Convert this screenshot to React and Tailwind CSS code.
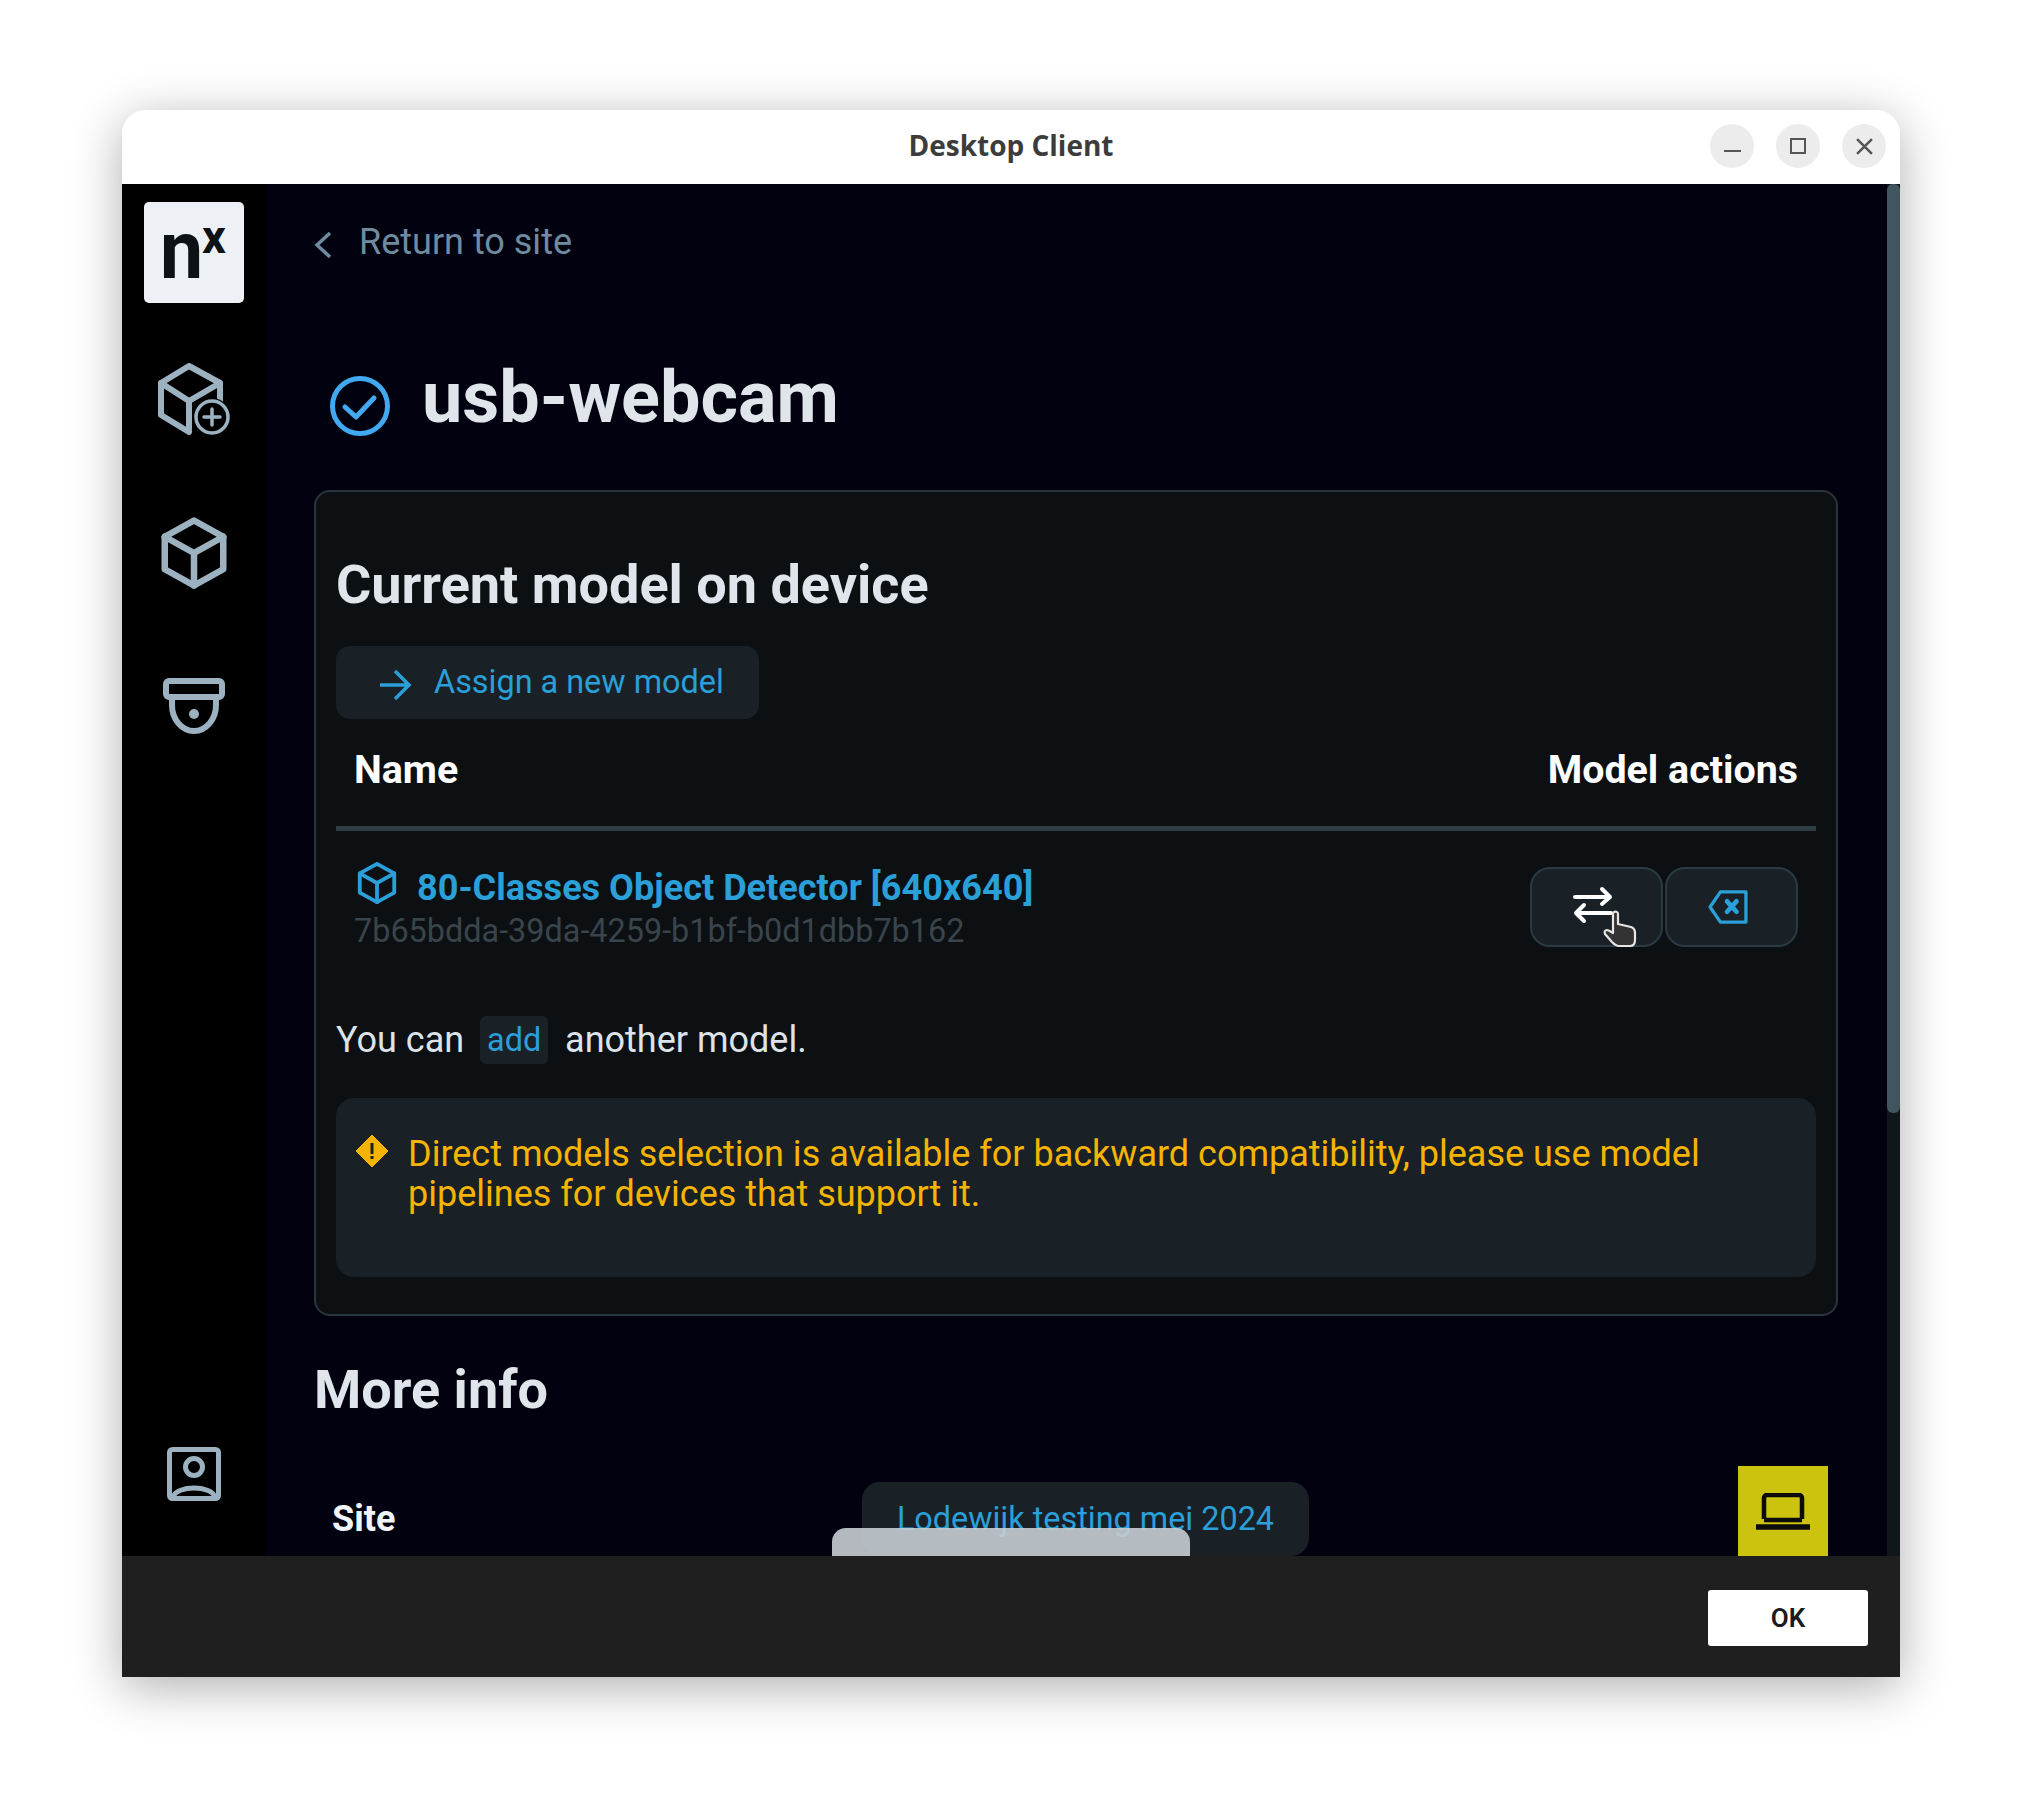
const sans = "font-['Roboto','Liberation_Sans',sans-serif]";

function CubeIcon({ className }) {
  return (
    <svg viewBox="0 0 24 24" fill="none" stroke="currentColor" strokeWidth="2" strokeLinejoin="round" strokeLinecap="round" className={className}>
      <path d="M12 2 L21 7 V17 L12 22 L3 17 V7 Z" />
      <path d="M3 7 L12 12 L21 7 M12 12 V22" />
    </svg>
  );
}

function Sidebar() {
  return (
    <div className="w-[144px] shrink-0 bg-black flex flex-col items-center text-[#9db2c0]">
      <div className="mt-[18px] w-[100px] h-[101px] bg-[#edf1f5] rounded-[5px] relative">
        <span className="absolute left-[16px] top-[9px] w-[40px] origin-left scale-x-[0.95] text-[#0d1215] text-[81px] leading-[80px] font-bold">n</span>
        <span className="absolute left-[58px] top-[11px] text-[#0d1215] text-[47px] leading-[47px] font-bold">x</span>
      </div>
      <div className="relative mt-[60px] w-[72px] h-[72px]">
        <svg viewBox="0 0 72 72" fill="none" stroke="currentColor" strokeLinejoin="round" strokeLinecap="round" className="w-[72px] h-[72px]">
          <path d="M62 38 V20 L31 3 L3 20 V52 L31 69" strokeWidth="6" />
          <path d="M3 20 L31 38 L62 20 M31 38 V66" strokeWidth="6" />
          <circle cx="54" cy="54" r="19" fill="#000" stroke="none" />
          <circle cx="54" cy="54" r="16" fill="#000" strokeWidth="3.5" />
          <path d="M54 46 V62 M46 54 H62" strokeWidth="3.5" />
        </svg>
      </div>
      <CubeIcon className="mt-[79px] w-[78px] h-[78px]" />
      <svg viewBox="0 0 62 56" fill="none" stroke="currentColor" strokeWidth="6" strokeLinejoin="round" className="mt-[86px] w-[62px] h-[56px]">
        <rect x="3" y="3" width="56" height="16" rx="3" />
        <path d="M9 19 V27 A22 26 0 0 0 53 27 V19" />
        <circle cx="31" cy="36" r="5" fill="currentColor" stroke="none" />
      </svg>
      <svg viewBox="0 0 54 54" fill="none" stroke="currentColor" strokeWidth="5" strokeLinejoin="round" className="mt-auto mb-[55px] w-[54px] h-[54px]">
        <rect x="2.5" y="2.5" width="49" height="49" rx="3" />
        <circle cx="27" cy="20" r="8.5" />
        <path d="M6 50 C10 38 44 38 48 50" />
      </svg>
    </div>
  );
}

function ModelRow() {
  return (
    <div className="flex items-start justify-between pl-[18px] pr-[18px] pt-[36px]">
      <div>
        <div className="flex items-center text-[#2a9fd8] h-[44px] -mt-[1px]">
          <CubeIcon className="w-[46px] h-[46px] -mt-[10px]" />
          <span className="ml-[17px] text-[36.1px] leading-[44px] font-bold">80-Classes Object Detector [640x640]</span>
        </div>
        <div className="text-[#39444b] text-[32.4px] leading-[42px]">7b65bdda-39da-4259-b1bf-b0d1dbb7b162</div>
      </div>
      <div className="flex gap-[2px]">
        <button className="relative w-[133px] h-[80px] rounded-[20px] bg-[#192127] border-2 border-[#2a3a42] flex items-center justify-center">
          <svg viewBox="0 0 42 38" fill="none" stroke="#ffffff" strokeWidth="4" strokeLinecap="round" strokeLinejoin="round" className="w-[42px] h-[38px] -ml-[7px] -mt-[4px]">
            <path d="M3 11 H38 M30 3 L38 11 L30 18" />
            <path d="M39 27 H4 M12 19 L4 27 L12 35" />
          </svg>
          <svg viewBox="0 0 34 38" className="absolute left-[70px] top-[41px] w-[36px] h-[38px]" fill="#333333" stroke="#e6e6e6" strokeWidth="2.2" strokeLinejoin="round">
            <path d="M11 2 C13 1 15 2 15 4 V14 L28 17 C31 18 32 20 32 23 V30 C32 34 30 36 27 36 H16 C13 36 11 34 9 32 L2 24 C1 22 2 20 4 20 C6 20 8 22 10 23 V4 C10 3 10 2 11 2 Z" />
          </svg>
        </button>
        <button className="w-[133px] h-[80px] rounded-[20px] bg-[#192127] border-2 border-[#2a3a42] flex items-center justify-center text-[#2a9fd8]">
          <svg viewBox="0 0 42 36" fill="none" stroke="currentColor" strokeWidth="3.5" strokeLinejoin="round" strokeLinecap="round" className="w-[40px] h-[34px] -ml-[7px]">
            <path d="M13 2 H40 V34 H13 L2 18 Z" />
            <path d="M20 12 L30 23 M30 12 L20 23" strokeWidth="5" />
          </svg>
        </button>
      </div>
    </div>
  );
}

export default function App() {
  return (
    <div className={`${sans} w-full h-[1812px] bg-white pl-[122px] pt-[110px] overflow-hidden`}>
      <div className="w-[1778px] h-[1567px] rounded-t-[24px] flex flex-col shadow-[0_10px_50px_rgba(0,0,0,0.32)]">
        {/* title bar */}
        <div className="relative h-[74px] shrink-0 bg-white rounded-t-[24px] flex items-center justify-center">
          <span className="-mt-[4px] font-['Open_Sans',sans-serif] font-bold text-[28px] text-[#3c3c3c]">Desktop Client</span>
          <div className="absolute right-[14px] top-[14px] flex gap-[22px] text-[#555555]">
            <div className="w-[44px] h-[44px] rounded-full bg-[#ececec] flex items-center justify-center">
              <div className="w-[17px] h-[2.5px] bg-current mt-[10px]" />
            </div>
            <div className="w-[44px] h-[44px] rounded-full bg-[#ececec] flex items-center justify-center">
              <div className="w-[16px] h-[16px] border-[2.5px] border-current" />
            </div>
            <div className="w-[44px] h-[44px] rounded-full bg-[#ececec] flex items-center justify-center">
              <svg viewBox="0 0 16 16" stroke="currentColor" strokeWidth="2.4" className="w-[17px] h-[17px]"><path d="M1 1 L15 15 M15 1 L1 15" /></svg>
            </div>
          </div>
        </div>

        {/* body */}
        <div className="relative h-[1372px] shrink-0 flex overflow-hidden bg-[#01010f]">
          <Sidebar />
          <div className="flex-1 min-w-0 pl-[48px] pr-[49px]">
            <div className="flex items-center h-[64px] mt-[26px] text-[#6f8ba0]">
              <svg viewBox="0 0 18 28" fill="none" stroke="currentColor" strokeWidth="3.5" className="w-[18px] h-[28px] mt-[6px]"><path d="M16 2 L3 14 L16 26" /></svg>
              <span className="ml-[27px] text-[36px] leading-[64px]">Return to site</span>
            </div>
            <div className="flex items-center mt-[78px] h-[92px] pl-[16px]">
              <svg viewBox="0 0 60 60" fill="none" stroke="#42a9f0" strokeWidth="5" strokeLinecap="round" strokeLinejoin="round" className="w-[60px] h-[60px] mt-[16px]">
                <circle cx="30" cy="30" r="27.5" />
                <path d="M15 31 L26 41 L44 22" />
              </svg>
              <span className="ml-[32px] text-[72px] leading-[92px] font-bold text-[#dfe5ea]">usb-webcam</span>
            </div>
            <div className="mt-[46px] h-[826px] rounded-[16px] border-2 border-[#2a343c] bg-[#0c1013] pl-[20px] pr-[20px]">
              <h2 className="mt-[59px] text-[54px] leading-[68px] font-bold text-[#dfe5ea]">Current model on device</h2>
              <button className="mt-[27px] w-[423px] h-[73px] rounded-[14px] bg-[#192127] flex items-center pl-[43px] text-[#2a9fd8]">
                <svg viewBox="0 0 32 32" fill="none" stroke="currentColor" strokeWidth="3.5" className="w-[32px] h-[32px] mt-[4px]"><path d="M1 16 H30 M16 2 L30 16 L16 30" /></svg>
                <span className="ml-[23px] text-[32.4px] leading-[73px]">Assign a new model</span>
              </button>
              <div className="flex justify-between h-[112px] px-[18px] pt-[21px] border-b-[5px] border-[#2f3d44] text-[#ffffff] text-[39.4px] leading-[60px] font-bold">
                <span>Name</span>
                <span>Model actions</span>
              </div>
              <ModelRow />
              <div className="flex items-center mt-[64px] h-[48px] text-[#dde3e8] text-[36px]">
                <span>You can</span>
                <span className="ml-[16px] w-[68px] h-[48px] rounded-[6px] bg-[#192127] text-[#2a9fd8] flex items-center justify-center text-[32.4px]">add</span>
                <span className="ml-[17px]">another model.</span>
              </div>
              <div className="mt-[34px] h-[179px] rounded-[18px] bg-[#192127] flex items-start pl-[20px] pt-[36px] pr-[20px] text-[#f5b400]">
                <svg viewBox="0 0 32 32" className="w-[32px] h-[32px] mt-[1px] shrink-0">
                  <path d="M16 0 L32 16 L16 32 L0 16 Z" fill="currentColor" stroke="currentColor" strokeWidth="1" strokeLinejoin="round" />
                  <rect x="14.5" y="8" width="3" height="11" fill="#192127" />
                  <rect x="14.5" y="21" width="3" height="3" fill="#192127" />
                </svg>
                <p className="ml-[20px] text-[36px] leading-[40px]">Direct models selection is available for backward compatibility, please use model pipelines for devices that support it.</p>
              </div>
            </div>
            <h2 className="mt-[40px] text-[54px] leading-[68px] font-bold text-[#dfe5ea]">More info</h2>
            <div className="flex items-center mt-[58px] h-[74px] pl-[18px]">
              <span className="w-[530px] text-[#f2f5f7] text-[36px] font-bold">Site</span>
              <span className="w-[447px] h-[74px] rounded-[18px] bg-[#192127] text-[#2a9fd8] text-[32.4px] flex items-center justify-center">Lodewijk testing mei 2024</span>
            </div>
          </div>

          {/* scrollbar */}
          <div className="w-[13px] shrink-0 bg-[#10171b]">
            <div className="h-[929px] rounded-[6px] bg-[#41555f]" />
          </div>

          {/* floating widgets */}
          <div className="absolute left-[1616px] bottom-0 w-[90px] h-[90px] bg-[#ccc30f] flex items-start justify-center pt-[27px]">
            <svg viewBox="0 0 54 38" fill="none" stroke="#0b0b0b" strokeWidth="4.5" className="w-[54px] h-[38px]">
              <path d="M8 26 V5 A3 3 0 0 1 11 2 H43 A3 3 0 0 1 46 5 V26" />
              <path d="M8 27 H46" />
              <path d="M0 34 H54" strokeWidth="5.5" />
            </svg>
          </div>
          <div className="absolute left-[710px] bottom-0 w-[358px] h-[28px] rounded-t-[14px] bg-[#c6cdd3]/90" />
        </div>

        {/* footer */}
        <div className="flex-1 bg-[#1f1f1f] flex items-start justify-end pt-[34px] pr-[32px]">
          <button className="w-[160px] h-[56px] bg-white rounded-[3px] text-[#1b1b1b] text-[26px] font-semibold">OK</button>
        </div>
      </div>
    </div>
  );
}
